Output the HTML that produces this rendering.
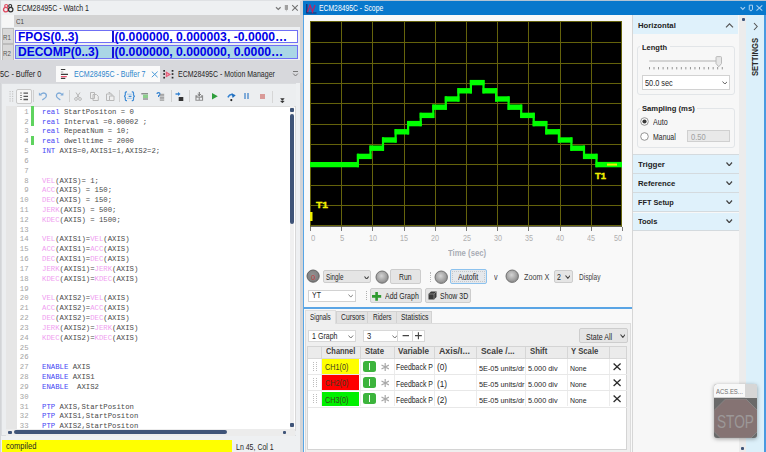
<!DOCTYPE html><html><head><meta charset="utf-8"><style>
*{margin:0;padding:0;box-sizing:border-box}
html,body{width:766px;height:452px;overflow:hidden;background:#eef0f2;font-family:"Liberation Sans",sans-serif;color:#333}
.a{position:absolute}
.t{position:absolute;white-space:nowrap;transform-origin:0 0}
.ln{position:absolute;left:0;height:9.8px;line-height:9.8px;white-space:pre}
.n{position:absolute;left:0;width:28.6px;text-align:right;color:#a4a4a4}
.c{position:absolute;left:42px}
.kw{color:#4646f4}
.mg{color:#f0a0f0}
</style></head><body>
<div class="a" style="left:0px;top:0px;width:302px;height:452px;background:#eef0f2"></div>
<div class="a" style="left:300px;top:0px;width:3px;height:452px;background:#d3d4d7"></div>
<div class="a" style="left:0px;top:0px;width:302px;height:1px;background:#dfe1e4"></div>
<div class="a" style="left:0px;top:0px;width:0.8px;height:452px;background:#d2d4d7"></div>
<svg class="a" style="left:2px;top:2px" width="13" height="12" viewBox="0 0 13 12"><circle cx="4.2" cy="4" r="1.5" stroke="#e04a60" stroke-width="1.2" fill="none"/><circle cx="3.8" cy="7.6" r="2.3" stroke="#e04a60" stroke-width="1.3" fill="none"/><circle cx="8.2" cy="4" r="1.5" stroke="#333" stroke-width="1.2" fill="none"/><circle cx="8.7" cy="7.6" r="2.2" stroke="#333" stroke-width="1.3" fill="none"/></svg>
<div class="t" style="left:16.70px;top:4.76px;font-size:8.2px;line-height:8.2px;color:#262626;transform:scaleX(0.8582);">ECM28495C - Watch 1</div>
<svg class="a" style="left:274px;top:3px" width="28" height="10" viewBox="0 0 28 10"><path d="M2 4.2 L4.3 6.4 L6.6 4.2" stroke="#777" stroke-width="1.2" fill="none"/><path d="M10.8 2 H14 V6.6 L13.4 7 H11.4 L10.8 6.6 Z" fill="#a0a0a0"/><path d="M12.4 7 V8.3" stroke="#bbb" stroke-width="0.8"/><path d="M18.2 2.2 L23.8 7.6 M23.8 2.2 L18.2 7.6" stroke="#707070" stroke-width="1.1"/></svg>
<div class="a" style="left:1.6px;top:15.4px;width:12.1px;height:12px;background:#f6f6f6"></div>
<div class="a" style="left:13.7px;top:15.4px;width:286.2px;height:12px;background:#d3d3d3"></div>
<div class="t" style="left:15.90px;top:18.37px;font-size:7.6px;line-height:7.6px;color:#444;transform:scaleX(0.8121);">C1</div>
<div class="a" style="left:1.6px;top:28px;width:12.2px;height:16.3px;background:#d8d8d8;border:1px solid #bcbcbc"></div>
<div class="a" style="left:1.6px;top:44.3px;width:12.2px;height:16.5px;background:#d8d8d8;border:1px solid #bcbcbc"></div>
<div class="t" style="left:3.40px;top:33.74px;font-size:7.4px;line-height:7.4px;color:#555;transform:scaleX(0.8235);">R1</div>
<div class="t" style="left:3.40px;top:50.04px;font-size:7.4px;line-height:7.4px;color:#555;transform:scaleX(0.8235);">R2</div>
<div class="a" style="left:15.3px;top:29.6px;width:282.7px;height:13px;background:#fff;border:1px solid #6f6ff5"></div>
<div class="a" style="left:15.3px;top:45.4px;width:282.7px;height:13.6px;background:#aad6e6;border:1px solid #6f6ff5"></div>
<div class="a" style="left:111.8px;top:31px;width:2px;height:10.5px;background:#1212d8"></div>
<div class="a" style="left:111.8px;top:47px;width:2px;height:10.5px;background:#1212d8"></div>
<div class="t" style="left:17.60px;top:30.57px;font-size:12.2px;line-height:12.2px;font-weight:bold;color:#0000e8;transform:scaleX(0.9794);">FPOS(0..3)</div>
<div class="t" style="left:114.40px;top:30.57px;font-size:12.2px;line-height:12.2px;font-weight:bold;color:#0000e8;">(0.000000, 0.000003, -0.0000…</div>
<div class="t" style="left:17.60px;top:46.27px;font-size:12.2px;line-height:12.2px;font-weight:bold;color:#0000e8;transform:scaleX(0.9860);">DECOMP(0..3)</div>
<div class="t" style="left:114.40px;top:46.27px;font-size:12.2px;line-height:12.2px;font-weight:bold;color:#0000e8;">(0.000000, 0.000000, 0.0000…</div>
<div class="a" style="left:0px;top:60.3px;width:302px;height:22.7px;background:#d7d8dc"></div>
<div class="t" style="left:0.40px;top:70.76px;font-size:8.2px;line-height:8.2px;color:#262626;transform:scaleX(0.8936);">5C - Buffer 0</div>
<div class="a" style="left:56.4px;top:66.3px;width:103.6px;height:15.6px;background:#fafafa"></div>
<svg class="a" style="left:60px;top:68px" width="9" height="12" viewBox="0 0 9 12"><path d="M0.9 1.5 H5.3 M0.9 6.4 H8 M0.9 10.4 H5.3" stroke="#3a3a3a" stroke-width="1.2"/><path d="M0.9 4 H3.3" stroke="#aaa" stroke-width="1.1"/><path d="M0.9 8.6 H6.8" stroke="#e8506e" stroke-width="1.2"/></svg>
<div class="t" style="left:73.80px;top:70.76px;font-size:8.2px;line-height:8.2px;color:#2f86cc;transform:scaleX(0.8645);">ECM28495C - Buffer 7</div>
<svg class="a" style="left:151px;top:71px" width="8" height="8" viewBox="0 0 8 8"><path d="M0.8 0.6 L6.6 6.2 M6.6 0.6 L0.8 6.2" stroke="#4a9ad8" stroke-width="1"/></svg>
<svg class="a" style="left:162px;top:69px" width="12" height="10" viewBox="0 0 12 10"><g fill="#2a2a2a"><rect x="1.3" y="1" width="1.7" height="1.7"/><rect x="1.3" y="4.2" width="1.7" height="1.7"/><rect x="1.3" y="7.8" width="1.7" height="1.7"/><rect x="9.7" y="1" width="1.7" height="1.7"/><rect x="9.7" y="4.2" width="1.7" height="1.7"/><rect x="9.7" y="7.8" width="1.7" height="1.7"/></g><path d="M4.3 3.3 L7.9 5.4 L4.3 7.6 Z" fill="#f4a0b0" stroke="#e55a76" stroke-width="1.1"/></svg>
<div class="t" style="left:177.70px;top:70.76px;font-size:8.2px;line-height:8.2px;color:#262626;transform:scaleX(0.8547);">ECM28495C - Motion Manager</div>
<svg class="a" style="left:292px;top:70px" width="7" height="8" viewBox="0 0 7 8"><path d="M1 1.5 H6" stroke="#777" stroke-width="1"/><path d="M1.2 3.6 L3.5 6 L5.8 3.6" stroke="#777" stroke-width="1" fill="none"/></svg>
<div class="a" style="left:1.3px;top:83px;width:294.5px;height:353.3px;background:#eceef0;border:1px solid #dadcdf;border-right:none"></div>
<div class="a" style="left:5.5px;top:105.5px;width:290px;height:325px;background:#fff;border-top:1px solid #dcdcdc;border-left:1px solid #d0d0d0;border-right:1px solid #d8d8d8"></div>
<div class="a" style="left:6px;top:106px;width:11px;height:324px;background:#e6e6e6"></div>
<div class="a" style="left:289.6px;top:106px;width:4.4px;height:323px;background:#f0f0f0"></div>
<div class="a" style="left:289.9px;top:108.2px;width:3.8px;height:3.7px;background:#3f5478;border-radius:1px"></div>
<div class="a" style="left:289.6px;top:114.3px;width:4.1px;height:109.6px;background:#3f5478;border-radius:2px"></div>
<div class="a" style="left:290.2px;top:423.3px;width:3.4px;height:3.5px;background:#3f5478;border-radius:1px"></div>
<div class="a" style="left:6px;top:429px;width:288.5px;height:7px;background:#ececec"></div>
<div class="a" style="left:8px;top:430.5px;width:3.5px;height:3.5px;background:#3f5478;border-radius:1px"></div>
<div class="a" style="left:14px;top:430.4px;width:212.6px;height:3.6px;background:#3f5478;border-radius:2px"></div>
<div class="a" style="left:282.6px;top:430.7px;width:3.6px;height:3.3px;background:#3f5478;border-radius:1px"></div>
<svg class="a" style="left:9px;top:90px" width="5" height="12" viewBox="0 0 5 12"><rect x="0.5" y="1" width="1.2" height="1.2" fill="#c6c6c6"/><rect x="0.5" y="3.4" width="1.2" height="1.2" fill="#c6c6c6"/><rect x="0.5" y="5.8" width="1.2" height="1.2" fill="#c6c6c6"/><rect x="0.5" y="8.2" width="1.2" height="1.2" fill="#c6c6c6"/><rect x="0.5" y="10.4" width="1.2" height="1.2" fill="#c6c6c6"/><rect x="3" y="1" width="1.2" height="1.2" fill="#c6c6c6"/><rect x="3" y="3.4" width="1.2" height="1.2" fill="#c6c6c6"/><rect x="3" y="5.8" width="1.2" height="1.2" fill="#c6c6c6"/><rect x="3" y="8.2" width="1.2" height="1.2" fill="#c6c6c6"/><rect x="3" y="10.4" width="1.2" height="1.2" fill="#c6c6c6"/></svg>
<div class="a" style="left:16px;top:89.3px;width:16px;height:14.4px;background:#f6f6f6;border:1px solid #c9c9c9;border-radius:2px"></div>
<svg class="a" style="left:19px;top:92px" width="10" height="9" viewBox="0 0 10 9"><path d="M1 1 H3 M1 3.5 H3 M1 5.5 H3 M1 7.5 H3" stroke="#777" stroke-width="0.8"/><path d="M4.5 1.2 H9 M4.5 4.3 H9 M4.5 7.5 H9" stroke="#555" stroke-width="1.3"/></svg>
<div class="a" style="left:33px;top:90px;width:1px;height:12px;background:#d0d0d0"></div>
<svg class="a" style="left:38px;top:91px" width="10" height="10" viewBox="0 0 10 10"><path d="M2.5 3.6 Q5 1.3 7 2.3 Q9 3.5 8 6 Q7 7.5 4.3 8.8" stroke="#7eaad8" stroke-width="1.3" fill="none"/><path d="M0.9 1.5 V4.5 H4 Z" fill="#7eaad8"/></svg>
<svg class="a" style="left:54.5px;top:91px" width="10" height="10" viewBox="0 0 10 10"><path d="M7.2 3.6 Q4.8 1.3 2.8 2.3 Q0.8 3.5 1.8 6 Q2.8 7.5 5.3 8.8" stroke="#7eaad8" stroke-width="1.3" fill="none"/><path d="M8.4 1.5 V4.5 H5.3 Z" fill="#7eaad8"/></svg>
<div class="a" style="left:68.5px;top:90px;width:1px;height:12px;background:#d0d0d0"></div>
<svg class="a" style="left:74px;top:92px" width="8" height="9" viewBox="0 0 8 9"><path d="M2 0.5 L5.5 6 M6 0.5 L2.5 6" stroke="#b4b4b4" stroke-width="1"/><circle cx="2" cy="7" r="1.4" fill="none" stroke="#b4b4b4" stroke-width="0.9"/><circle cx="6" cy="7" r="1.4" fill="none" stroke="#b4b4b4" stroke-width="0.9"/></svg>
<svg class="a" style="left:89.5px;top:92px" width="9" height="9" viewBox="0 0 9 9"><path d="M0.5 0.5 H4.5 V6.5 H0.5 Z M3 2.5 H6.5 L8.3 4.3 V8.5 H3 Z" stroke="#b8b8b8" stroke-width="1" fill="#efefef"/></svg>
<svg class="a" style="left:105.5px;top:92px" width="9" height="9" viewBox="0 0 9 9"><path d="M0.5 2 H6 V8.5 H0.5 Z" stroke="#b8b8b8" stroke-width="1" fill="none"/><path d="M2.5 0.5 H4 V2" stroke="#b8b8b8" stroke-width="1" fill="none"/><path d="M3.5 4 H8 V8.5 H3.5 Z" stroke="#b8b8b8" stroke-width="1" fill="#efefef"/></svg>
<div class="a" style="left:119.4px;top:90px;width:1px;height:12px;background:#d0d0d0"></div>
<svg class="a" style="left:123.5px;top:91px" width="11" height="10.5" viewBox="0 0 11 10.5"><path d="M3 0.8 H2.2 Q1.3 0.8 1.3 2 V4 L0.4 5.2 L1.3 6.4 V8.4 Q1.3 9.6 2.2 9.6 H3 M7.8 0.8 H8.6 Q9.5 0.8 9.5 2 V4 L10.4 5.2 L9.5 6.4 V8.4 Q9.5 9.6 8.6 9.6 H7.8" stroke="#3d8bd6" stroke-width="1.2" fill="none"/><path d="M3 3.2 H7.8 M3 7.4 H7.8" stroke="#9cc4ea" stroke-width="0.9"/><path d="M4.6 5.4 H7.5" stroke="#3d8bd6" stroke-width="1.3"/></svg>
<svg class="a" style="left:141px;top:92.5px" width="8" height="7" viewBox="0 0 8 7"><path d="M0.3 0.8 H7 M2 6 H7" stroke="#555" stroke-width="0.9"/><rect x="2" y="1.6" width="5" height="3.4" fill="#8ccf8c"/></svg>
<svg class="a" style="left:155.5px;top:92px" width="9" height="9" viewBox="0 0 9 9"><path d="M1 2 Q1 0.6 2.5 0.6 Q4 0.6 4 2 Q4 3.2 2.6 3.8 V5" stroke="#2f7fd0" stroke-width="1.2" fill="none"/><path d="M3.8 2.3 H8.2 M3.8 3.8 H8.2 M3.8 5.3 H8.2 M3.8 6.8 H8.2 M3.8 8.2 H8.2" stroke="#8a8a8a" stroke-width="0.9"/></svg>
<div class="a" style="left:170.6px;top:90px;width:1px;height:12px;background:#d0d0d0"></div>
<svg class="a" style="left:174.5px;top:91.5px" width="9" height="10" viewBox="0 0 9 10"><path d="M0.5 2 H3.5" stroke="#2f7fd0" stroke-width="1.4"/><path d="M3 0 L5.5 2 L3 4 Z" fill="#2f7fd0"/><rect x="3.7" y="5" width="4.6" height="4" fill="#333"/></svg>
<div class="a" style="left:189.4px;top:90px;width:1px;height:12px;background:#d0d0d0"></div>
<svg class="a" style="left:194.5px;top:92px" width="9" height="9" viewBox="0 0 9 9"><path d="M4.25 0 V3.6 M2.7 2.2 L4.25 3.7 L5.8 2.2" stroke="#666" stroke-width="1" fill="none"/><path d="M0.4 3.2 H2.4 V4.6 H6.1 V3.2 H8.1 V8.7 H0.4 Z" fill="#8e8e8e"/><rect x="1.5" y="5.7" width="2.2" height="2.1" fill="#eceef0"/><rect x="4.8" y="5.7" width="2.2" height="2.1" fill="#eceef0"/></svg>
<svg class="a" style="left:211.5px;top:93.3px" width="6" height="7" viewBox="0 0 6 7"><path d="M0 0 L5.8 3.3 L0 6.6 Z" fill="#2e9e3c"/></svg>
<svg class="a" style="left:226.5px;top:92.5px" width="9" height="9" viewBox="0 0 9 9"><path d="M0.9 4.4 Q2.6 0.9 5.8 1.6" stroke="#2f7fd0" stroke-width="1.5" fill="none"/><path d="M4.6 0.2 L8.7 2.3 L5.6 4.9 Z" fill="#1f6fc0"/><circle cx="4.3" cy="7.1" r="1.1" fill="#222"/></svg>
<div class="a" style="left:244px;top:93px;width:2px;height:6px;background:#7eaad8"></div>
<div class="a" style="left:247.1px;top:93px;width:2px;height:6px;background:#7eaad8"></div>
<div class="a" style="left:259.9px;top:93.8px;width:5.1px;height:5.1px;background:#d99a98"></div>
<div class="a" style="left:272.4px;top:90.7px;width:1px;height:12px;background:#d6d6d6"></div>
<svg class="a" style="left:279.5px;top:98px" width="5" height="6" viewBox="0 0 5 6"><path d="M0.6 0.6 H4.2 L2.4 2.4 Z M0.6 3 H4.2 L2.4 4.9 Z" fill="#333" stroke="#333" stroke-width="0.5"/></svg>
<div class="a" style="left:0;top:106px;width:289px;height:323px;overflow:hidden;font-family:'Liberation Mono',monospace;font-size:7.3px;color:#4a4a4a">
<div class="ln" style="top:1.70px;width:289px"><span class="n">1</span><span class="c"><span class="kw">real</span> StartPositon = 0</span></div>
<div class="ln" style="top:11.53px;width:289px"><span class="n">2</span><span class="c"><span class="kw">real</span> Interval =0.00002 ;</span></div>
<div class="ln" style="top:21.36px;width:289px"><span class="n">3</span><span class="c"><span class="kw">real</span> RepeatNum = 10;</span></div>
<div class="ln" style="top:31.19px;width:289px"><span class="n">4</span><span class="c"><span class="kw">real</span> dwelltime = 2000</span></div>
<div class="ln" style="top:41.02px;width:289px"><span class="n">5</span><span class="c"><span class="kw">INT</span> AXIS=0,AXIS1=1,AXIS2=2;</span></div>
<div class="ln" style="top:50.85px;width:289px"><span class="n">6</span><span class="c"></span></div>
<div class="ln" style="top:60.68px;width:289px"><span class="n">7</span><span class="c"></span></div>
<div class="ln" style="top:70.51px;width:289px"><span class="n">8</span><span class="c"><span class="mg">VEL</span>(AXIS)= 1;</span></div>
<div class="ln" style="top:80.34px;width:289px"><span class="n">9</span><span class="c"><span class="mg">ACC</span>(AXIS) = 150;</span></div>
<div class="ln" style="top:90.17px;width:289px"><span class="n">10</span><span class="c"><span class="mg">DEC</span>(AXIS) = 150;</span></div>
<div class="ln" style="top:100.00px;width:289px"><span class="n">11</span><span class="c"><span class="mg">JERK</span>(AXIS) = 500;</span></div>
<div class="ln" style="top:109.83px;width:289px"><span class="n">12</span><span class="c"><span class="mg">KDEC</span>(AXIS) = 1500;</span></div>
<div class="ln" style="top:119.66px;width:289px"><span class="n">13</span><span class="c"></span></div>
<div class="ln" style="top:129.49px;width:289px"><span class="n">14</span><span class="c"><span class="mg">VEL</span>(AXIS1)=<span class="mg">VEL</span>(AXIS)</span></div>
<div class="ln" style="top:139.32px;width:289px"><span class="n">15</span><span class="c"><span class="mg">ACC</span>(AXIS1)=<span class="mg">ACC</span>(AXIS)</span></div>
<div class="ln" style="top:149.15px;width:289px"><span class="n">16</span><span class="c"><span class="mg">DEC</span>(AXIS1)=<span class="mg">DEC</span>(AXIS)</span></div>
<div class="ln" style="top:158.98px;width:289px"><span class="n">17</span><span class="c"><span class="mg">JERK</span>(AXIS1)=<span class="mg">JERK</span>(AXIS)</span></div>
<div class="ln" style="top:168.81px;width:289px"><span class="n">18</span><span class="c"><span class="mg">KDEC</span>(AXIS1)=<span class="mg">KDEC</span>(AXIS)</span></div>
<div class="ln" style="top:178.64px;width:289px"><span class="n">19</span><span class="c"></span></div>
<div class="ln" style="top:188.47px;width:289px"><span class="n">20</span><span class="c"><span class="mg">VEL</span>(AXIS2)=<span class="mg">VEL</span>(AXIS)</span></div>
<div class="ln" style="top:198.30px;width:289px"><span class="n">21</span><span class="c"><span class="mg">ACC</span>(AXIS2)=<span class="mg">ACC</span>(AXIS)</span></div>
<div class="ln" style="top:208.13px;width:289px"><span class="n">22</span><span class="c"><span class="mg">DEC</span>(AXIS2)=<span class="mg">DEC</span>(AXIS)</span></div>
<div class="ln" style="top:217.96px;width:289px"><span class="n">23</span><span class="c"><span class="mg">JERK</span>(AXIS2)=<span class="mg">JERK</span>(AXIS)</span></div>
<div class="ln" style="top:227.79px;width:289px"><span class="n">24</span><span class="c"><span class="mg">KDEC</span>(AXIS2)=<span class="mg">KDEC</span>(AXIS)</span></div>
<div class="ln" style="top:237.62px;width:289px"><span class="n">25</span><span class="c"></span></div>
<div class="ln" style="top:247.45px;width:289px"><span class="n">26</span><span class="c"></span></div>
<div class="ln" style="top:257.28px;width:289px"><span class="n">27</span><span class="c"><span class="kw">ENABLE</span> AXIS</span></div>
<div class="ln" style="top:267.11px;width:289px"><span class="n">28</span><span class="c"><span class="kw">ENABLE</span> AXIS1</span></div>
<div class="ln" style="top:276.94px;width:289px"><span class="n">29</span><span class="c"><span class="kw">ENABLE</span>  AXIS2</span></div>
<div class="ln" style="top:286.77px;width:289px"><span class="n">30</span><span class="c"></span></div>
<div class="ln" style="top:296.60px;width:289px"><span class="n">31</span><span class="c"><span class="kw">PTP</span> AXIS,StartPositon</span></div>
<div class="ln" style="top:306.43px;width:289px"><span class="n">32</span><span class="c"><span class="kw">PTP</span> AXIS1,StartPositon</span></div>
<div class="ln" style="top:316.26px;width:289px"><span class="n">33</span><span class="c"><span class="kw">PTP</span> AXIS2,StartPositon</span></div>
<div class="ln" style="top:326.09px;width:289px"><span class="n">34</span><span class="c"></span></div>
</div>
<div class="a" style="left:31.1px;top:106px;width:2.5px;height:19.7px;background:#5fd35f"></div>
<div class="a" style="left:31.1px;top:135.6px;width:2.5px;height:9.8px;background:#5fd35f"></div>
<div class="a" style="left:1.5px;top:440.1px;width:230.4px;height:12px;background:#ffff00"></div>
<div class="t" style="left:5.90px;top:443.46px;font-size:8.2px;line-height:8.2px;color:#262626;transform:scaleX(0.9268);">compiled</div>
<div class="t" style="left:236.20px;top:443.96px;font-size:8.2px;line-height:8.2px;color:#262626;transform:scaleX(0.8544);">Ln 45, Col 1</div>
<div class="a" style="left:302.9px;top:0px;width:463.1px;height:452px;background:#f9f9f9"></div>
<div class="a" style="left:302.9px;top:0px;width:1.6px;height:452px;background:#58a6e6"></div>
<div class="a" style="left:302.9px;top:1px;width:463.1px;height:14.1px;background:#0878cc"></div>
<div class="a" style="left:302.9px;top:0px;width:463.1px;height:1px;background:#b2c4d4"></div>
<svg class="a" style="left:306px;top:3.5px" width="11" height="10" viewBox="0 0 11 10"><path d="M0.8 0 V9 H10.5" stroke="#1a2a70" stroke-width="1.2" fill="none"/><path d="M1.5 8 L4 1 L6.5 8 L9 1" stroke="#c02060" stroke-width="1.2" fill="none"/></svg>
<div class="t" style="left:319.30px;top:4.76px;font-size:8.2px;line-height:8.2px;color:#ffffff;transform:scaleX(0.8298);">ECM28495C - Scope</div>
<svg class="a" style="left:738px;top:3px" width="27" height="10" viewBox="0 0 27 10"><path d="M2.6 4.2 L4.8 6.4 L7 4.2" stroke="#a8d0f0" stroke-width="1.2" fill="none"/><path d="M11.3 2.2 H14.5 V6.8 L14 7.3 H11.8 L11.3 6.8 Z" fill="none" stroke="#a8d0f0" stroke-width="1"/><path d="M12.9 7.3 V8.3" stroke="#a8d0f0" stroke-width="0.9"/><path d="M18.5 2.3 L24.3 7.6 M24.3 2.3 L18.5 7.6" stroke="#a8d0f0" stroke-width="1.1"/></svg>
<svg class="a" style="left:310px;top:21px" width="312" height="205.6" viewBox="310 21 312 205.6"><rect x="310" y="21" width="312" height="205.6" fill="#000"/><line x1="310.50" y1="21" x2="310.50" y2="226.6" stroke="#66640c" stroke-width="1"/><line x1="341.50" y1="21" x2="341.50" y2="226.6" stroke="#66640c" stroke-width="1"/><line x1="372.50" y1="21" x2="372.50" y2="226.6" stroke="#66640c" stroke-width="1"/><line x1="404.50" y1="21" x2="404.50" y2="226.6" stroke="#66640c" stroke-width="1"/><line x1="435.50" y1="21" x2="435.50" y2="226.6" stroke="#66640c" stroke-width="1"/><line x1="466.50" y1="21" x2="466.50" y2="226.6" stroke="#66640c" stroke-width="1"/><line x1="497.50" y1="21" x2="497.50" y2="226.6" stroke="#66640c" stroke-width="1"/><line x1="528.50" y1="21" x2="528.50" y2="226.6" stroke="#66640c" stroke-width="1"/><line x1="560.50" y1="21" x2="560.50" y2="226.6" stroke="#66640c" stroke-width="1"/><line x1="591.50" y1="21" x2="591.50" y2="226.6" stroke="#66640c" stroke-width="1"/><line x1="621.50" y1="21" x2="621.50" y2="226.6" stroke="#66640c" stroke-width="1"/><line x1="310" y1="21.50" x2="622" y2="21.50" stroke="#66640c" stroke-width="1"/><line x1="310" y1="42.50" x2="622" y2="42.50" stroke="#66640c" stroke-width="1"/><line x1="310" y1="63.50" x2="622" y2="63.50" stroke="#66640c" stroke-width="1"/><line x1="310" y1="83.50" x2="622" y2="83.50" stroke="#66640c" stroke-width="1"/><line x1="310" y1="103.50" x2="622" y2="103.50" stroke="#66640c" stroke-width="1"/><line x1="310" y1="124.50" x2="622" y2="124.50" stroke="#66640c" stroke-width="1"/><line x1="310" y1="144.50" x2="622" y2="144.50" stroke="#66640c" stroke-width="1"/><line x1="310" y1="164.50" x2="622" y2="164.50" stroke="#66640c" stroke-width="1"/><line x1="310" y1="185.50" x2="622" y2="185.50" stroke="#66640c" stroke-width="1"/><line x1="310" y1="205.50" x2="622" y2="205.50" stroke="#66640c" stroke-width="1"/><line x1="310" y1="225.50" x2="622" y2="225.50" stroke="#66640c" stroke-width="1"/><line x1="309.0" y1="164.6" x2="358.9" y2="164.6" stroke="#00ff00" stroke-width="5.4"/><line x1="357.9" y1="153.8" x2="357.9" y2="167.2" stroke="#00ff00" stroke-width="2.2"/><line x1="356.9" y1="156.4" x2="371.5" y2="156.4" stroke="#00ff00" stroke-width="5.4"/><line x1="370.5" y1="145.6" x2="370.5" y2="159.0" stroke="#00ff00" stroke-width="2.2"/><line x1="369.5" y1="148.2" x2="384.0" y2="148.2" stroke="#00ff00" stroke-width="5.4"/><line x1="383.0" y1="137.4" x2="383.0" y2="150.8" stroke="#00ff00" stroke-width="2.2"/><line x1="382.0" y1="140.0" x2="396.6" y2="140.0" stroke="#00ff00" stroke-width="5.4"/><line x1="395.6" y1="129.2" x2="395.6" y2="142.6" stroke="#00ff00" stroke-width="2.2"/><line x1="394.6" y1="131.8" x2="409.1" y2="131.8" stroke="#00ff00" stroke-width="5.4"/><line x1="408.1" y1="121.0" x2="408.1" y2="134.4" stroke="#00ff00" stroke-width="2.2"/><line x1="407.1" y1="123.6" x2="421.7" y2="123.6" stroke="#00ff00" stroke-width="5.4"/><line x1="420.7" y1="112.8" x2="420.7" y2="126.2" stroke="#00ff00" stroke-width="2.2"/><line x1="419.7" y1="115.4" x2="434.3" y2="115.4" stroke="#00ff00" stroke-width="5.4"/><line x1="433.3" y1="104.6" x2="433.3" y2="118.0" stroke="#00ff00" stroke-width="2.2"/><line x1="432.3" y1="107.2" x2="446.8" y2="107.2" stroke="#00ff00" stroke-width="5.4"/><line x1="445.8" y1="96.4" x2="445.8" y2="109.8" stroke="#00ff00" stroke-width="2.2"/><line x1="444.8" y1="99.0" x2="459.4" y2="99.0" stroke="#00ff00" stroke-width="5.4"/><line x1="458.4" y1="88.2" x2="458.4" y2="101.6" stroke="#00ff00" stroke-width="2.2"/><line x1="457.4" y1="90.8" x2="471.9" y2="90.8" stroke="#00ff00" stroke-width="5.4"/><line x1="470.9" y1="80.0" x2="470.9" y2="93.4" stroke="#00ff00" stroke-width="2.2"/><line x1="469.9" y1="82.6" x2="484.5" y2="82.6" stroke="#00ff00" stroke-width="5.4"/><line x1="483.5" y1="80.0" x2="483.5" y2="93.4" stroke="#00ff00" stroke-width="2.2"/><line x1="482.5" y1="90.8" x2="497.1" y2="90.8" stroke="#00ff00" stroke-width="5.4"/><line x1="496.1" y1="88.2" x2="496.1" y2="101.6" stroke="#00ff00" stroke-width="2.2"/><line x1="495.1" y1="99.0" x2="509.6" y2="99.0" stroke="#00ff00" stroke-width="5.4"/><line x1="508.6" y1="96.4" x2="508.6" y2="109.8" stroke="#00ff00" stroke-width="2.2"/><line x1="507.6" y1="107.2" x2="522.2" y2="107.2" stroke="#00ff00" stroke-width="5.4"/><line x1="521.2" y1="104.6" x2="521.2" y2="118.0" stroke="#00ff00" stroke-width="2.2"/><line x1="520.2" y1="115.4" x2="534.7" y2="115.4" stroke="#00ff00" stroke-width="5.4"/><line x1="533.7" y1="112.8" x2="533.7" y2="126.2" stroke="#00ff00" stroke-width="2.2"/><line x1="532.7" y1="123.6" x2="547.3" y2="123.6" stroke="#00ff00" stroke-width="5.4"/><line x1="546.3" y1="121.0" x2="546.3" y2="134.4" stroke="#00ff00" stroke-width="2.2"/><line x1="545.3" y1="131.8" x2="559.9" y2="131.8" stroke="#00ff00" stroke-width="5.4"/><line x1="558.9" y1="129.2" x2="558.9" y2="142.6" stroke="#00ff00" stroke-width="2.2"/><line x1="557.9" y1="140.0" x2="572.4" y2="140.0" stroke="#00ff00" stroke-width="5.4"/><line x1="571.4" y1="137.4" x2="571.4" y2="150.8" stroke="#00ff00" stroke-width="2.2"/><line x1="570.4" y1="148.2" x2="585.0" y2="148.2" stroke="#00ff00" stroke-width="5.4"/><line x1="584.0" y1="145.6" x2="584.0" y2="159.0" stroke="#00ff00" stroke-width="2.2"/><line x1="583.0" y1="156.4" x2="597.5" y2="156.4" stroke="#00ff00" stroke-width="5.4"/><line x1="596.5" y1="153.8" x2="596.5" y2="167.2" stroke="#00ff00" stroke-width="2.2"/><line x1="595.5" y1="164.6" x2="623.0" y2="164.6" stroke="#00ff00" stroke-width="5.4"/><line x1="607" y1="164.6" x2="617" y2="164.6" stroke="#f0f000" stroke-width="2"/><rect x="310" y="212" width="2.5" height="9" fill="#f0f000"/></svg>
<div class="t" style="left:316.10px;top:199.97px;font-size:9.6px;line-height:9.6px;font-weight:bold;color:#f0f000;transform:scaleX(1.0640);-webkit-text-stroke:0.35px #f0f000;">T1</div>
<div class="t" style="left:595.20px;top:170.67px;font-size:9.6px;line-height:9.6px;font-weight:bold;color:#f0f000;transform:scaleX(0.9835);-webkit-text-stroke:0.35px #f0f000;">T1</div>
<div class="a" style="left:310px;top:227px;width:1px;height:4.2px;background:#7a7a7a"></div>
<div class="t" style="left:310.70px;top:234.96px;font-size:8.2px;line-height:8.2px;color:#b0b0b0;transform:scaleX(0.9448);">0</div>
<div class="a" style="left:341px;top:227px;width:1px;height:4.2px;background:#7a7a7a"></div>
<div class="t" style="left:339.55px;top:234.96px;font-size:8.2px;line-height:8.2px;color:#b0b0b0;transform:scaleX(0.9448);">5</div>
<div class="a" style="left:372px;top:227px;width:1px;height:4.2px;background:#7a7a7a"></div>
<div class="t" style="left:368.90px;top:234.96px;font-size:8.2px;line-height:8.2px;color:#b0b0b0;transform:scaleX(0.8789);">10</div>
<div class="a" style="left:404px;top:227px;width:1px;height:4.2px;background:#7a7a7a"></div>
<div class="t" style="left:400.10px;top:234.96px;font-size:8.2px;line-height:8.2px;color:#b0b0b0;transform:scaleX(0.8789);">15</div>
<div class="a" style="left:435px;top:227px;width:1px;height:4.2px;background:#7a7a7a"></div>
<div class="t" style="left:431.30px;top:234.96px;font-size:8.2px;line-height:8.2px;color:#b0b0b0;transform:scaleX(0.8789);">20</div>
<div class="a" style="left:466px;top:227px;width:1px;height:4.2px;background:#7a7a7a"></div>
<div class="t" style="left:462.50px;top:234.96px;font-size:8.2px;line-height:8.2px;color:#b0b0b0;transform:scaleX(0.8789);">25</div>
<div class="a" style="left:497px;top:227px;width:1px;height:4.2px;background:#7a7a7a"></div>
<div class="t" style="left:493.70px;top:234.96px;font-size:8.2px;line-height:8.2px;color:#b0b0b0;transform:scaleX(0.8789);">30</div>
<div class="a" style="left:528px;top:227px;width:1px;height:4.2px;background:#7a7a7a"></div>
<div class="t" style="left:524.90px;top:234.96px;font-size:8.2px;line-height:8.2px;color:#b0b0b0;transform:scaleX(0.8789);">35</div>
<div class="a" style="left:560px;top:227px;width:1px;height:4.2px;background:#7a7a7a"></div>
<div class="t" style="left:556.10px;top:234.96px;font-size:8.2px;line-height:8.2px;color:#b0b0b0;transform:scaleX(0.8789);">40</div>
<div class="a" style="left:591px;top:227px;width:1px;height:4.2px;background:#7a7a7a"></div>
<div class="t" style="left:587.30px;top:234.96px;font-size:8.2px;line-height:8.2px;color:#b0b0b0;transform:scaleX(0.8789);">45</div>
<div class="a" style="left:622px;top:227px;width:1px;height:4.2px;background:#7a7a7a"></div>
<div class="t" style="left:614.20px;top:234.96px;font-size:8.2px;line-height:8.2px;color:#b0b0b0;transform:scaleX(0.8789);">50</div>
<div class="t" style="left:447.70px;top:250.46px;font-size:8.2px;line-height:8.2px;font-weight:bold;color:#a9adb5;transform:scaleX(0.9449);">Time (sec)</div>
<svg class="a" style="left:305.9px;top:269.3px" width="14.2" height="14.2"><defs><radialGradient id="g0" cx="45%" cy="40%" r="60%"><stop offset="0" stop-color="#929292"/><stop offset="1" stop-color="#7c7c7c"/></radialGradient></defs><circle cx="7.1" cy="7.1" r="6.1" fill="url(#g0)" stroke="#606060" stroke-width="1"/><text x="7.1" y="10.5" text-anchor="middle" font-family="Liberation Sans" font-size="7.6" fill="#c44040">0</text></svg>
<div class="a" style="left:322.8px;top:269.8px;width:48.7px;height:13.7px;background:#e5e5e5;border:1px solid #cdcdcd;border-radius:2px"></div>
<div class="t" style="left:325.80px;top:273.66px;font-size:8.2px;line-height:8.2px;color:#262626;transform:scaleX(0.7677);">Single</div>
<svg class="a" style="left:363.5px;top:275.8px" width="5.2" height="3.6"><path d="M0.5 0.5 L2.6 3.1 L4.7 0.5" stroke="#444" stroke-width="1.1" fill="none"/></svg>
<svg class="a" style="left:374.5px;top:269.6px" width="14.2" height="14.2"><defs><radialGradient id="g1" cx="45%" cy="40%" r="60%"><stop offset="0" stop-color="#d4d4d4"/><stop offset="1" stop-color="#8a8a8a"/></radialGradient></defs><circle cx="7.1" cy="7.1" r="6.1" fill="url(#g1)" stroke="#727272" stroke-width="1"/></svg>
<div class="a" style="left:390.4px;top:269px;width:30.3px;height:15.3px;background:#e5e5e5;border:1px solid #cdcdcd;border-radius:2px"></div>
<div class="t" style="left:399.40px;top:273.86px;font-size:8.2px;line-height:8.2px;color:#262626;transform:scaleX(0.8374);">Run</div>
<div class="a" style="left:430.4px;top:272px;width:1px;height:10px;border-left:1px dotted #b8b8b8"></div>
<svg class="a" style="left:433.9px;top:269.8px" width="14.4" height="14.4"><defs><radialGradient id="g2" cx="45%" cy="40%" r="60%"><stop offset="0" stop-color="#d4d4d4"/><stop offset="1" stop-color="#8a8a8a"/></radialGradient></defs><circle cx="7.2" cy="7.2" r="6.2" fill="url(#g2)" stroke="#727272" stroke-width="1"/></svg>
<div class="a" style="left:450px;top:269px;width:36.8px;height:15.3px;background:#e5e8ec;border:1px solid #8cc2ee;border-radius:2px"></div>
<div class="a" style="left:452px;top:271px;width:32.8px;height:11.3px;border:1px dotted #c4c8cc"></div>
<div class="t" style="left:458.30px;top:273.86px;font-size:8.2px;line-height:8.2px;color:#262626;transform:scaleX(0.8775);">Autofit</div>
<div class="t" style="left:494.20px;top:274.06px;font-size:8.2px;line-height:8.2px;color:#444;transform:scaleX(0.8780);">v</div>
<svg class="a" style="left:504.6px;top:269.2px" width="14.4" height="14.4"><defs><radialGradient id="g3" cx="45%" cy="40%" r="60%"><stop offset="0" stop-color="#d4d4d4"/><stop offset="1" stop-color="#8a8a8a"/></radialGradient></defs><circle cx="7.2" cy="7.2" r="6.2" fill="url(#g3)" stroke="#727272" stroke-width="1"/></svg>
<div class="t" style="left:523.80px;top:274.06px;font-size:8.2px;line-height:8.2px;color:#444;transform:scaleX(0.8885);">Zoom X</div>
<div class="a" style="left:554px;top:269.5px;width:18.8px;height:13.6px;background:#e5e5e5;border:1px solid #cdcdcd;border-radius:2px"></div>
<div class="t" style="left:557.20px;top:274.06px;font-size:8.2px;line-height:8.2px;color:#262626;transform:scaleX(0.8570);">2</div>
<svg class="a" style="left:564.5px;top:275.3px" width="5.7" height="3.8"><path d="M0.5 0.5 L2.85 3.3 L5.2 0.5" stroke="#444" stroke-width="1.1" fill="none"/></svg>
<div class="t" style="left:579.10px;top:274.06px;font-size:8.2px;line-height:8.2px;color:#444;transform:scaleX(0.7994);">Display</div>
<div class="a" style="left:307.6px;top:289.7px;width:48.3px;height:12.1px;background:#fff;border:1px solid #d2d2d2"></div>
<div class="t" style="left:312.00px;top:292.36px;font-size:8.2px;line-height:8.2px;color:#262626;transform:scaleX(0.8479);">YT</div>
<svg class="a" style="left:347.8px;top:294.3px" width="5.6" height="3.6"><path d="M0.5 0.5 L2.8 3.1 L5.1 0.5" stroke="#888" stroke-width="1" fill="none"/></svg>
<div class="a" style="left:365.9px;top:291.4px;width:1px;height:8.7px;border-left:1px dotted #b0b0b0"></div>
<div class="a" style="left:370.2px;top:288.4px;width:52.1px;height:14.3px;background:#e5e5e5;border:1px solid #cdcdcd;border-radius:2px"></div>
<svg class="a" style="left:372px;top:291.8px" width="10" height="9" viewBox="0 0 10 9"><path d="M4.6 0 V8.7 M0 4.35 H9.2" stroke="#2f9a2f" stroke-width="2.6"/></svg>
<div class="t" style="left:385.40px;top:292.66px;font-size:8.2px;line-height:8.2px;color:#262626;transform:scaleX(0.8525);">Add Graph</div>
<div class="a" style="left:425px;top:288.4px;width:46.2px;height:14.3px;background:#e5e5e5;border:1px solid #cdcdcd;border-radius:2px"></div>
<svg class="a" style="left:427.5px;top:291px" width="9" height="9" viewBox="0 0 9 9"><path d="M0.5 3 L3 0.5 H8.5 V6 L6 8.5 H0.5 Z" fill="#3a3a3a"/><path d="M0.5 3 H6 V8.5 M6 3 L8.5 0.5" stroke="#9a9a9a" stroke-width="0.7" fill="none"/></svg>
<div class="t" style="left:439.80px;top:292.66px;font-size:8.2px;line-height:8.2px;color:#262626;transform:scaleX(0.8471);">Show 3D</div>
<div class="a" style="left:302.9px;top:307px;width:329px;height:2px;background:#5aa5e5"></div>
<div class="a" style="left:304.9px;top:322.7px;width:325.9px;height:129.3px;background:#efefef;border:1px solid #dcdcdc;border-bottom:none"></div>
<div class="a" style="left:336.3px;top:311.1px;width:32.1px;height:12.1px;background:#e3e3e3;border:1px solid #d2d2d2;border-bottom:none"></div>
<div class="a" style="left:368.4px;top:311.1px;width:28.7px;height:12.1px;background:#e3e3e3;border:1px solid #d2d2d2;border-bottom:none;border-left:none"></div>
<div class="a" style="left:397.1px;top:311.1px;width:35.2px;height:12.1px;background:#e3e3e3;border:1px solid #d2d2d2;border-bottom:none;border-left:none"></div>
<div class="a" style="left:304.9px;top:310.3px;width:31.4px;height:13.4px;background:#efefef;border:1px solid #dedede;border-bottom:none"></div>
<div class="t" style="left:310.00px;top:314.06px;font-size:8.2px;line-height:8.2px;color:#262626;transform:scaleX(0.7733);">Signals</div>
<div class="t" style="left:340.50px;top:314.06px;font-size:8.2px;line-height:8.2px;color:#262626;transform:scaleX(0.8258);">Cursors</div>
<div class="t" style="left:373.40px;top:314.06px;font-size:8.2px;line-height:8.2px;color:#262626;transform:scaleX(0.7849);">Riders</div>
<div class="t" style="left:401.20px;top:314.06px;font-size:8.2px;line-height:8.2px;color:#262626;transform:scaleX(0.8415);">Statistics</div>
<div class="a" style="left:307.6px;top:330.2px;width:48.8px;height:11.4px;background:#fff;border:1px solid #d8d8d8"></div>
<div class="t" style="left:312.10px;top:332.86px;font-size:8.2px;line-height:8.2px;color:#262626;transform:scaleX(0.8636);">1 Graph</div>
<svg class="a" style="left:348.2px;top:334.5px" width="5.6" height="3.6"><path d="M0.5 0.5 L2.8 3.1 L5.1 0.5" stroke="#777" stroke-width="1" fill="none"/></svg>
<div class="a" style="left:363.3px;top:330.2px;width:35.1px;height:11.4px;background:#fff;border:1px solid #d8d8d8"></div>
<div class="t" style="left:367.30px;top:332.86px;font-size:8.2px;line-height:8.2px;color:#262626;transform:scaleX(0.9229);">3</div>
<svg class="a" style="left:391.5px;top:334.5px" width="5.6" height="3.6"><path d="M0.5 0.5 L2.8 3.1 L5.1 0.5" stroke="#777" stroke-width="1" fill="none"/></svg>
<div class="a" style="left:398px;top:330.2px;width:14.7px;height:11.4px;background:#fff;border:1px solid #d8d8d8;border-left:none"></div>
<div class="a" style="left:412.2px;top:330.2px;width:12.9px;height:11.4px;background:#fff;border:1px solid #d8d8d8"></div>
<svg class="a" style="left:398px;top:330px" width="28" height="12" viewBox="0 0 28 12"><path d="M4.6 5.6 H11 M17 5.6 H23.8 M20.4 2.3 V9.3" stroke="#444" stroke-width="1.1"/></svg>
<div class="a" style="left:579px;top:328.2px;width:48.7px;height:14.4px;background:#e5e5e5;border:1px solid #cdcdcd;border-radius:2px"></div>
<div class="t" style="left:585.70px;top:333.66px;font-size:8.2px;line-height:8.2px;color:#262626;transform:scaleX(0.8673);">State All</div>
<svg class="a" style="left:619.8px;top:334.0px" width="5.7" height="3.9"><path d="M0.5 0.5 L2.85 3.4 L5.2 0.5" stroke="#444" stroke-width="1.1" fill="none"/></svg>
<div class="a" style="left:307px;top:345.5px;width:319.8px;height:104.1px;background:#fff;border:1px solid #d4d4d4"></div>
<div class="a" style="left:308px;top:346.5px;width:317.8px;height:12.1px;background:#ebebeb;border-bottom:1px solid #d8d8d8"></div>
<div class="a" style="left:321.3px;top:346.5px;width:1px;height:12.1px;background:#d6d6d6"></div>
<div class="a" style="left:321.3px;top:358.6px;width:1px;height:47.6px;background:#ececec"></div>
<div class="a" style="left:360px;top:346.5px;width:1px;height:12.1px;background:#d6d6d6"></div>
<div class="a" style="left:360px;top:358.6px;width:1px;height:47.6px;background:#ececec"></div>
<div class="a" style="left:393.5px;top:346.5px;width:1px;height:12.1px;background:#d6d6d6"></div>
<div class="a" style="left:393.5px;top:358.6px;width:1px;height:47.6px;background:#ececec"></div>
<div class="a" style="left:434.2px;top:346.5px;width:1px;height:12.1px;background:#d6d6d6"></div>
<div class="a" style="left:434.2px;top:358.6px;width:1px;height:47.6px;background:#ececec"></div>
<div class="a" style="left:476px;top:346.5px;width:1px;height:12.1px;background:#d6d6d6"></div>
<div class="a" style="left:476px;top:358.6px;width:1px;height:47.6px;background:#ececec"></div>
<div class="a" style="left:525.4px;top:346.5px;width:1px;height:12.1px;background:#d6d6d6"></div>
<div class="a" style="left:525.4px;top:358.6px;width:1px;height:47.6px;background:#ececec"></div>
<div class="a" style="left:566.5px;top:346.5px;width:1px;height:12.1px;background:#d6d6d6"></div>
<div class="a" style="left:566.5px;top:358.6px;width:1px;height:47.6px;background:#ececec"></div>
<div class="a" style="left:608.7px;top:346.5px;width:1px;height:12.1px;background:#d6d6d6"></div>
<div class="a" style="left:608.7px;top:358.6px;width:1px;height:47.6px;background:#ececec"></div>
<div class="t" style="left:325.80px;top:348.26px;font-size:8.2px;line-height:8.2px;font-weight:bold;color:#404040;transform:scaleX(0.9057);">Channel</div>
<div class="t" style="left:364.80px;top:348.26px;font-size:8.2px;line-height:8.2px;font-weight:bold;color:#404040;transform:scaleX(0.9477);">State</div>
<div class="t" style="left:398.00px;top:348.26px;font-size:8.2px;line-height:8.2px;font-weight:bold;color:#404040;transform:scaleX(0.9890);">Variable</div>
<div class="t" style="left:438.80px;top:348.26px;font-size:8.2px;line-height:8.2px;font-weight:bold;color:#404040;transform:scaleX(1.0767);">Axis/I...</div>
<div class="t" style="left:480.70px;top:348.26px;font-size:8.2px;line-height:8.2px;font-weight:bold;color:#404040;transform:scaleX(1.0274);">Scale /...</div>
<div class="t" style="left:530.00px;top:348.26px;font-size:8.2px;line-height:8.2px;font-weight:bold;color:#404040;transform:scaleX(0.9503);">Shift</div>
<div class="t" style="left:571.20px;top:348.26px;font-size:8.2px;line-height:8.2px;font-weight:bold;color:#404040;transform:scaleX(0.9439);">Y Scale</div>
<div class="a" style="left:308px;top:374.20000000000005px;width:318.8px;height:1px;background:#e8e8e8"></div>
<svg class="a" style="left:313px;top:362px" width="5" height="11" viewBox="0 0 5 11"><rect x="0" y="0" width="1" height="1" fill="#bdbdbd"/><rect x="0" y="2" width="1" height="1" fill="#bdbdbd"/><rect x="0" y="4" width="1" height="1" fill="#bdbdbd"/><rect x="0" y="6" width="1" height="1" fill="#bdbdbd"/><rect x="0" y="8" width="1" height="1" fill="#bdbdbd"/><rect x="3" y="0" width="1" height="1" fill="#bdbdbd"/><rect x="3" y="2" width="1" height="1" fill="#bdbdbd"/><rect x="3" y="4" width="1" height="1" fill="#bdbdbd"/><rect x="3" y="6" width="1" height="1" fill="#bdbdbd"/><rect x="3" y="8" width="1" height="1" fill="#bdbdbd"/></svg>
<div class="a" style="left:322.2px;top:359.2px;width:37.1px;height:14.6px;background:#ffff00"></div>
<div class="t" style="left:324.90px;top:364.26px;font-size:8.2px;line-height:8.2px;color:#3a3a20;transform:scaleX(0.8849);">CH1(0)</div>
<div class="a" style="left:363px;top:361.0px;width:13.1px;height:11.0px;background:#3cb43c;border-radius:2.5px"></div>
<div class="a" style="left:368.8px;top:363.0px;width:1.3px;height:7.2px;background:#f0fff0"></div>
<svg class="a" style="left:380.5px;top:362.6px" width="8.5" height="8" viewBox="0 0 8.5 8"><path d="M4.2 0 V8 M0.5 2 L7.9 6 M7.9 2 L0.5 6" stroke="#a8a8a8" stroke-width="1.2"/></svg>
<div class="t" style="left:396.20px;top:364.46px;font-size:8.2px;line-height:8.2px;color:#262626;transform:scaleX(0.8435);">Feedback P</div>
<div class="t" style="left:436.90px;top:364.46px;font-size:8.2px;line-height:8.2px;color:#262626;transform:scaleX(1.0096);">(0)</div>
<div class="a" style="left:477px;top:358.6px;width:48px;height:16px;overflow:hidden">
<div class="t" style="left:1.80px;top:6.11px;font-size:7.9px;line-height:7.9px;color:#262626;transform:scaleX(0.9252);">5E-05 units/dr</div>
</div>
<div class="t" style="left:527.90px;top:364.71px;font-size:7.9px;line-height:7.9px;color:#262626;transform:scaleX(0.9229);">5.000 div</div>
<div class="t" style="left:569.80px;top:364.71px;font-size:7.9px;line-height:7.9px;color:#262626;transform:scaleX(0.8739);">None</div>
<svg class="a" style="left:613.3px;top:363.1px" width="8.2" height="7.6" viewBox="0 0 8.2 7.6"><path d="M0.6 0.6 L7.6 7 M7.6 0.6 L0.6 7" stroke="#2a2a2a" stroke-width="1.3"/></svg>
<div class="a" style="left:308px;top:390.40000000000003px;width:318.8px;height:1px;background:#e8e8e8"></div>
<svg class="a" style="left:313px;top:378px" width="5" height="11" viewBox="0 0 5 11"><rect x="0" y="0" width="1" height="1" fill="#bdbdbd"/><rect x="0" y="2" width="1" height="1" fill="#bdbdbd"/><rect x="0" y="4" width="1" height="1" fill="#bdbdbd"/><rect x="0" y="6" width="1" height="1" fill="#bdbdbd"/><rect x="0" y="8" width="1" height="1" fill="#bdbdbd"/><rect x="3" y="0" width="1" height="1" fill="#bdbdbd"/><rect x="3" y="2" width="1" height="1" fill="#bdbdbd"/><rect x="3" y="4" width="1" height="1" fill="#bdbdbd"/><rect x="3" y="6" width="1" height="1" fill="#bdbdbd"/><rect x="3" y="8" width="1" height="1" fill="#bdbdbd"/></svg>
<div class="a" style="left:322.2px;top:375.4px;width:37.1px;height:14.6px;background:#ff0000"></div>
<div class="t" style="left:324.90px;top:380.46px;font-size:8.2px;line-height:8.2px;color:#3a3a20;transform:scaleX(0.8849);">CH2(0)</div>
<div class="a" style="left:363px;top:377.2px;width:13.1px;height:11.0px;background:#3cb43c;border-radius:2.5px"></div>
<div class="a" style="left:368.8px;top:379.2px;width:1.3px;height:7.2px;background:#f0fff0"></div>
<svg class="a" style="left:380.5px;top:378.8px" width="8.5" height="8" viewBox="0 0 8.5 8"><path d="M4.2 0 V8 M0.5 2 L7.9 6 M7.9 2 L0.5 6" stroke="#a8a8a8" stroke-width="1.2"/></svg>
<div class="t" style="left:396.20px;top:380.66px;font-size:8.2px;line-height:8.2px;color:#262626;transform:scaleX(0.8435);">Feedback P</div>
<div class="t" style="left:436.90px;top:380.66px;font-size:8.2px;line-height:8.2px;color:#262626;transform:scaleX(1.0096);">(1)</div>
<div class="a" style="left:477px;top:374.8px;width:48px;height:16px;overflow:hidden">
<div class="t" style="left:1.80px;top:6.11px;font-size:7.9px;line-height:7.9px;color:#262626;transform:scaleX(0.9252);">5E-05 units/dr</div>
</div>
<div class="t" style="left:527.90px;top:380.91px;font-size:7.9px;line-height:7.9px;color:#262626;transform:scaleX(0.9229);">5.000 div</div>
<div class="t" style="left:569.80px;top:380.91px;font-size:7.9px;line-height:7.9px;color:#262626;transform:scaleX(0.8739);">None</div>
<svg class="a" style="left:613.3px;top:379.3px" width="8.2" height="7.6" viewBox="0 0 8.2 7.6"><path d="M0.6 0.6 L7.6 7 M7.6 0.6 L0.6 7" stroke="#2a2a2a" stroke-width="1.3"/></svg>
<div class="a" style="left:308px;top:406.5px;width:318.8px;height:1px;background:#e8e8e8"></div>
<svg class="a" style="left:313px;top:394px" width="5" height="11" viewBox="0 0 5 11"><rect x="0" y="0" width="1" height="1" fill="#bdbdbd"/><rect x="0" y="2" width="1" height="1" fill="#bdbdbd"/><rect x="0" y="4" width="1" height="1" fill="#bdbdbd"/><rect x="0" y="6" width="1" height="1" fill="#bdbdbd"/><rect x="0" y="8" width="1" height="1" fill="#bdbdbd"/><rect x="3" y="0" width="1" height="1" fill="#bdbdbd"/><rect x="3" y="2" width="1" height="1" fill="#bdbdbd"/><rect x="3" y="4" width="1" height="1" fill="#bdbdbd"/><rect x="3" y="6" width="1" height="1" fill="#bdbdbd"/><rect x="3" y="8" width="1" height="1" fill="#bdbdbd"/></svg>
<div class="a" style="left:322.2px;top:391.5px;width:37.1px;height:14.6px;background:#00f000"></div>
<div class="t" style="left:324.90px;top:396.56px;font-size:8.2px;line-height:8.2px;color:#3a3a20;transform:scaleX(0.8849);">CH3(0)</div>
<div class="a" style="left:363px;top:393.3px;width:13.1px;height:11.0px;background:#3cb43c;border-radius:2.5px"></div>
<div class="a" style="left:368.8px;top:395.3px;width:1.3px;height:7.2px;background:#f0fff0"></div>
<svg class="a" style="left:380.5px;top:394.9px" width="8.5" height="8" viewBox="0 0 8.5 8"><path d="M4.2 0 V8 M0.5 2 L7.9 6 M7.9 2 L0.5 6" stroke="#a8a8a8" stroke-width="1.2"/></svg>
<div class="t" style="left:396.20px;top:396.76px;font-size:8.2px;line-height:8.2px;color:#262626;transform:scaleX(0.8435);">Feedback P</div>
<div class="t" style="left:436.90px;top:396.76px;font-size:8.2px;line-height:8.2px;color:#262626;transform:scaleX(1.0096);">(2)</div>
<div class="a" style="left:477px;top:390.9px;width:48px;height:16px;overflow:hidden">
<div class="t" style="left:1.80px;top:6.11px;font-size:7.9px;line-height:7.9px;color:#262626;transform:scaleX(0.9252);">5E-05 units/dr</div>
</div>
<div class="t" style="left:527.90px;top:397.01px;font-size:7.9px;line-height:7.9px;color:#262626;transform:scaleX(0.9229);">5.000 div</div>
<div class="t" style="left:569.80px;top:397.01px;font-size:7.9px;line-height:7.9px;color:#262626;transform:scaleX(0.8739);">None</div>
<svg class="a" style="left:613.3px;top:395.4px" width="8.2" height="7.6" viewBox="0 0 8.2 7.6"><path d="M0.6 0.6 L7.6 7 M7.6 0.6 L0.6 7" stroke="#2a2a2a" stroke-width="1.3"/></svg>
<div class="a" style="left:632px;top:15px;width:107px;height:437px;background:#f7f7f7;border-left:1px solid #d6d6d6"></div>
<div class="a" style="left:632.8px;top:15.3px;width:105.7px;height:18.5px;background:#dff1fb"></div>
<div class="t" style="left:637.80px;top:21.83px;font-size:8px;line-height:8px;font-weight:bold;color:#222;transform:scaleX(0.9663);">Horizontal</div>
<svg class="a" style="left:724.5px;top:21.5px" width="10" height="7" viewBox="0 0 10 7"><path d="M1 5.3 L4.5 1.8 L8 5.3" stroke="#555" stroke-width="1.15" fill="none"/></svg>
<div class="a" style="left:637.4px;top:45.5px;width:97.2px;height:49.7px;border:1px solid #e2e5e8;border-radius:3px"></div>
<div class="a" style="left:640px;top:40px;width:30px;height:10px;background:#f7f7f7"></div>
<div class="t" style="left:641.80px;top:44.03px;font-size:8px;line-height:8px;font-weight:bold;color:#222;transform:scaleX(0.9370);">Length</div>
<div class="a" style="left:648.8px;top:60px;width:73.5px;height:2.3px;background:#d4d4d4;border-radius:1px"></div>
<svg class="a" style="left:714.5px;top:55.5px" width="8" height="12" viewBox="0 0 8 12"><path d="M1 1.5 Q1 0.6 2 0.6 H5.5 Q6.5 0.6 6.5 1.5 V7.5 L3.75 10.8 L1 7.5 Z" fill="#e6e6e6" stroke="#b4b4b4" stroke-width="0.9"/></svg>
<svg class="a" style="left:648px;top:66.8px" width="76" height="3" viewBox="0 0 76 3"><g fill="#8a8a8a"><rect x="1.00" y="0" width="0.9" height="2.4"/><rect x="5.55" y="0" width="0.9" height="2.4"/><rect x="10.10" y="0" width="0.9" height="2.4"/><rect x="14.65" y="0" width="0.9" height="2.4"/><rect x="19.20" y="0" width="0.9" height="2.4"/><rect x="23.75" y="0" width="0.9" height="2.4"/><rect x="28.30" y="0" width="0.9" height="2.4"/><rect x="32.85" y="0" width="0.9" height="2.4"/><rect x="37.40" y="0" width="0.9" height="2.4"/><rect x="41.95" y="0" width="0.9" height="2.4"/><rect x="46.50" y="0" width="0.9" height="2.4"/><rect x="51.05" y="0" width="0.9" height="2.4"/><rect x="55.60" y="0" width="0.9" height="2.4"/><rect x="60.15" y="0" width="0.9" height="2.4"/><rect x="64.70" y="0" width="0.9" height="2.4"/><rect x="69.25" y="0" width="0.9" height="2.4"/><rect x="73.80" y="0" width="0.9" height="2.4"/></g></svg>
<div class="a" style="left:642px;top:74.9px;width:88px;height:15.5px;background:#fff;border:1px solid #d2d2d2"></div>
<div class="t" style="left:645.10px;top:79.66px;font-size:8.2px;line-height:8.2px;color:#262626;transform:scaleX(0.8969);">50.0 sec</div>
<svg class="a" style="left:721.5px;top:80.8px" width="5.8" height="3.6"><path d="M0.5 0.5 L2.9 3.1 L5.3 0.5" stroke="#666" stroke-width="1" fill="none"/></svg>
<div class="a" style="left:637.4px;top:107.8px;width:97.2px;height:40.0px;border:1px solid #e2e5e8;border-radius:3px"></div>
<div class="a" style="left:640px;top:102px;width:57px;height:10px;background:#f7f7f7"></div>
<div class="t" style="left:641.60px;top:104.63px;font-size:8px;line-height:8px;font-weight:bold;color:#222;transform:scaleX(0.9561);">Sampling (ms)</div>
<svg class="a" style="left:639.8px;top:117.3px" width="9" height="9" viewBox="0 0 9 9"><circle cx="4.5" cy="4.5" r="3.8" fill="#fff" stroke="#8a8a8a" stroke-width="0.9"/><circle cx="4.5" cy="4.5" r="2.1" fill="#3a3a3a"/></svg>
<div class="t" style="left:652.50px;top:119.36px;font-size:8.2px;line-height:8.2px;color:#262626;transform:scaleX(0.8724);">Auto</div>
<svg class="a" style="left:639.8px;top:132px" width="9" height="9" viewBox="0 0 9 9"><circle cx="4.5" cy="4.5" r="3.8" fill="#fff" stroke="#8a8a8a" stroke-width="0.9"/></svg>
<div class="t" style="left:652.50px;top:134.06px;font-size:8.2px;line-height:8.2px;color:#262626;transform:scaleX(0.8477);">Manual</div>
<div class="a" style="left:687.4px;top:130.3px;width:42.3px;height:12.1px;background:#e9e9e9;border:1px solid #d0d0d0"></div>
<div class="t" style="left:690.50px;top:133.56px;font-size:8.2px;line-height:8.2px;color:#a0a0a0;transform:scaleX(0.9217);">0.50</div>
<div class="a" style="left:632.8px;top:153.7px;width:106px;height:1.3px;background:#d4dade"></div>
<div class="a" style="left:632.8px;top:155px;width:105.8px;height:17.9px;background:#dff1fb"></div>
<div class="t" style="left:638.00px;top:160.73px;font-size:8px;line-height:8px;font-weight:bold;color:#222;transform:scaleX(0.9919);">Trigger</div>
<svg class="a" style="left:726.0px;top:161.5px" width="6.5" height="4.2"><path d="M0.5 0.5 L3.25 3.7 L6.0 0.5" stroke="#444" stroke-width="1.2" fill="none"/></svg>
<div class="a" style="left:632.8px;top:173.0px;width:106px;height:1.3px;background:#d4dade"></div>
<div class="a" style="left:632.8px;top:174.3px;width:105.8px;height:17.5px;background:#dff1fb"></div>
<div class="t" style="left:638.00px;top:180.03px;font-size:8px;line-height:8px;font-weight:bold;color:#222;transform:scaleX(0.9669);">Reference</div>
<svg class="a" style="left:726.0px;top:180.8px" width="6.5" height="4.2"><path d="M0.5 0.5 L3.25 3.7 L6.0 0.5" stroke="#444" stroke-width="1.2" fill="none"/></svg>
<div class="a" style="left:632.8px;top:192.1px;width:106px;height:1.3px;background:#d4dade"></div>
<div class="a" style="left:632.8px;top:193.4px;width:105.8px;height:17.4px;background:#dff1fb"></div>
<div class="t" style="left:638.00px;top:199.13px;font-size:8px;line-height:8px;font-weight:bold;color:#222;transform:scaleX(0.9151);">FFT Setup</div>
<svg class="a" style="left:726.0px;top:199.9px" width="6.5" height="4.2"><path d="M0.5 0.5 L3.25 3.7 L6.0 0.5" stroke="#444" stroke-width="1.2" fill="none"/></svg>
<div class="a" style="left:632.8px;top:211.2px;width:106px;height:1.3px;background:#d4dade"></div>
<div class="a" style="left:632.8px;top:212.5px;width:105.8px;height:17.2px;background:#dff1fb"></div>
<div class="t" style="left:638.00px;top:218.23px;font-size:8px;line-height:8px;font-weight:bold;color:#222;transform:scaleX(0.9315);">Tools</div>
<svg class="a" style="left:726.0px;top:219.0px" width="6.5" height="4.2"><path d="M0.5 0.5 L3.25 3.7 L6.0 0.5" stroke="#444" stroke-width="1.2" fill="none"/></svg>
<div class="a" style="left:632.8px;top:229.7px;width:106px;height:1.3px;background:#d4dade"></div>
<div class="a" style="left:739px;top:15px;width:7px;height:437px;background:#ececec"></div>
<div class="a" style="left:742px;top:18px;width:2.5px;height:3px;background:#3f5478;border-radius:1px"></div>
<div class="a" style="left:740.8px;top:446.5px;width:3.0px;height:3.5px;background:#3f5478;border-radius:1px"></div>
<div class="a" style="left:746px;top:15px;width:18px;height:437px;background:#dcf0fa"></div>
<div class="a" style="left:763.5px;top:15px;width:2.5px;height:437px;background:#4a9ae0"></div>
<svg class="a" style="left:752.5px;top:21.5px" width="6" height="9" viewBox="0 0 6 9"><path d="M1 1 L4.2 4.5 L1 8" stroke="#555" stroke-width="1.1" fill="none"/></svg>
<div class="t" style="left:755.5px;top:56.6px;transform:translate(-50%,-50%) rotate(-90deg) scaleX(0.93);transform-origin:50% 50%;font-size:8.2px;line-height:8px;font-weight:bold;color:#2a2a2a">SETTINGS</div>
<div class="a" style="left:713.5px;top:383.5px;width:43.5px;height:54.5px;background:#6a6a6a;border-radius:3px;box-shadow:0 1px 4px rgba(0,0,0,0.35)"></div>
<div class="a" style="left:713.5px;top:383.5px;width:43.5px;height:14.8px;background:#f8f8f8;border-radius:3px 3px 0 0;border-bottom:1px solid #cfcfcf"></div>
<div class="a" style="left:744.5px;top:384px;width:12.5px;height:14px;background:#d6d6d6;border-radius:0 3px 0 0"></div>
<div class="t" style="left:716.00px;top:388.99px;font-size:7.1px;line-height:7.1px;color:#707070;transform:scaleX(0.8388);">ACS.ES...</div>
<svg class="a" style="left:713.5px;top:399px" width="43.5" height="39" viewBox="0 0 43.5 39"><polygon points="11.5,0 32,0 43.5,11.5 43.5,32.5 37,39 6.5,39 0,32.5 0,11.5" fill="#857373" stroke="#8c8c8c" stroke-width="0.8"/></svg>
<div class="t" style="left:717.30px;top:412.94px;font-size:18.5px;line-height:18.5px;color:#9c9898;transform:scaleX(0.7394);">STOP</div>
</body></html>
